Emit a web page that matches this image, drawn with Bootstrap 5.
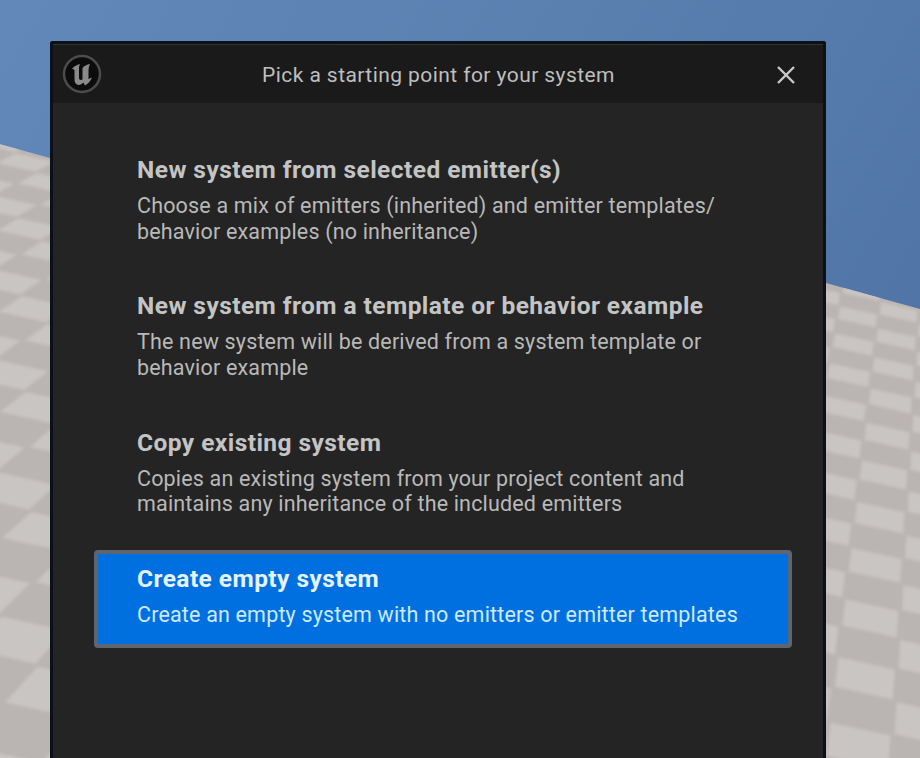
<!DOCTYPE html>
<html lang="en">
<head>
<meta charset="utf-8">
<title>Pick a starting point for your system</title>
<link rel="stylesheet" href="https://cdn.jsdelivr.net/npm/bootstrap@5.3.0/dist/css/bootstrap.min.css">
<style>
html, body { height: 758px; overflow: hidden; }
body { position: relative; background: #557aaa; font-family: Roboto, "Liberation Sans", sans-serif; }
.scene { position: absolute; inset: 0; width: 920px; height: 758px; }
.wizard { position: relative; width: 776px; height: 717px; margin: 41px 0 0 50px; background: #242424; border: 3px solid #0b1119; border-bottom: 0; border-radius: 3px 3px 0 0; }
.wizard-head { height: 59px; padding: 0 26px 0 9px; background: #1a1a1a; border-top: 1px solid #33332e; }
.wizard-title { margin-top: 3px; font-size: 21px; letter-spacing: .43px; color: #bfbfbf; }
.wizard-close { margin-top: 2px; }
.wizard-body { padding: 38px 31px 0 41px; }
.list-group .list-group-item.pick-item { padding: 10px 39px 17px; margin: 0 0 12.3px; background: transparent; border: 4px solid transparent; border-radius: 4px; color: #b9b9b9; }
.list-group .list-group-item.pick-item.active { margin: 0; background: #0070e0; border-color: #5f656c; color: #cdeaff; }
.pick-name { margin: 0 0 8px; font-size: 24.5px; letter-spacing: .44px; line-height: 30px; font-weight: 700; color: #c4c4c4; }
.pick-item.active .pick-name { color: #e4f3ff; }
.pick-desc { margin: 0; font-size: 21.5px; letter-spacing: .17px; line-height: 25.5px; }
</style>
</head>
<body>
<svg class="scene" viewBox="0 0 920 758" aria-hidden="true">
  <defs>
    <linearGradient id="sky" x1="0" y1="0" x2="1" y2="0.5">
      <stop offset="0" stop-color="#6188b8"/>
      <stop offset="0.5" stop-color="#5a80b0"/>
      <stop offset="1" stop-color="#4f74a5"/>
    </linearGradient>
    <filter id="soft"><feGaussianBlur stdDeviation="1.500"/></filter>
    <filter id="logosoft"><feGaussianBlur stdDeviation="0.500"/></filter>
    <clipPath id="floorclip"><path d="M-5 143L50 158L50 760L-5 760ZM826 283L920 309L920 760L826 760Z"/></clipPath>
  </defs>
  <rect width="920" height="758" fill="url(#sky)"/>
  <g clip-path="url(#floorclip)">
    <rect width="920" height="758" fill="#bab4b2"/>
    <g id="tiles" filter="url(#soft)" fill="#c9c5c3"></g>
  </g>
</svg>

<div class="wizard d-flex flex-column">
  <div class="wizard-head d-flex align-items-center justify-content-between flex-shrink-0">
    <svg width="40" height="40" viewBox="0 0 40 40" aria-hidden="true">
      <circle cx="20" cy="20" r="18" fill="#0c0c0c" stroke="#4c4c4c" stroke-width="2.500"/>
      <path filter="url(#logosoft)" d="M10 15C12 12 15 11 18 10L17 13V24C17 26 19 26.500 20.500 25.500V14C22 12 25 10.500 28 10C27 12 26.500 14 26.500 16V25L30 23.500C28.500 27 26 30 23 31.500L21.500 28.500C19.500 30.500 17 31.500 15 30.500C13 29.500 12.500 27.500 12.500 25V16C12 15.500 11 15 10 15Z" fill="#8a8a8a"/>
    </svg>
    <span class="wizard-title">Pick a starting point for your system</span>
    <svg class="wizard-close" width="22" height="22" viewBox="0 0 22 22" aria-hidden="true">
      <path d="M3 3L19 19M19 3L3 19" stroke="#c9c9c9" stroke-width="2.400" fill="none"/>
    </svg>
  </div>
  <div class="wizard-body">
    <div class="list-group">
      <div class="list-group-item pick-item">
        <h2 class="pick-name">New system from selected emitter(s)</h2>
        <p class="pick-desc">Choose a mix of emitters (inherited) and emitter templates/<br>behavior examples (no inheritance)</p>
      </div>
      <div class="list-group-item pick-item">
        <h2 class="pick-name">New system from a template or behavior example</h2>
        <p class="pick-desc">The new system will be derived from a system template or<br>behavior example</p>
      </div>
      <div class="list-group-item pick-item">
        <h2 class="pick-name">Copy existing system</h2>
        <p class="pick-desc">Copies an existing system from your project content and<br>maintains any inheritance of the included emitters</p>
      </div>
      <div class="list-group-item pick-item active">
        <h2 class="pick-name">Create empty system</h2>
        <p class="pick-desc">Create an empty system with no emitters or emitter templates</p>
      </div>
    </div>
  </div>
</div>

<script src="https://cdn.jsdelivr.net/npm/bootstrap@5.3.0/dist/js/bootstrap.bundle.min.js"></script>
<script>
(function () {
  var VX = 958, VY = -338, SL = 0.22, K = 33127, N = 47.5;
  function pt(i, j) {
    var d = K / (N - j);
    var s = d / 681;
    var xr = 837 + 40 * i;
    var yr = SL * xr + 133;
    return [VX + (xr - VX) * s, VY + (yr - VY) * s];
  }
  var out = [];
  for (var j = -20; j < 26; j++) {
    for (var i = -30; i < 8; i++) {
      if (((i + j) % 2 + 2) % 2) continue;
      var g = 0.03;
      var q = [pt(i + g, j + g), pt(i + 1 - g, j + g), pt(i + 1 - g, j + 1 - g), pt(i + g, j + 1 - g)];
      out.push('<polygon points="' + q.map(function (p) { return p[0].toFixed(1) + ',' + p[1].toFixed(1); }).join(' ') + '"/>');
    }
  }
  document.getElementById('tiles').innerHTML = out.join('');
})();
</script>
</body>
</html>
